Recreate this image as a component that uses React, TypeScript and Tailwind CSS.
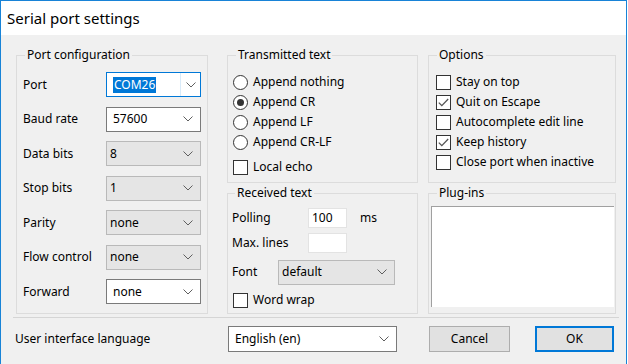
import React from 'react';

function Chevron({ color = '#5f5f5f' }: { color?: string }) {
  return (
    <svg width="10" height="6" viewBox="0 0 10 6" className="shrink-0">
      <path d="M0.5 0.5 L5 5 L9.5 0.5" fill="none" stroke={color} strokeWidth="1" />
    </svg>
  );
}

type ComboKind = 'focus' | 'white' | 'gray';

function Combo({ value, kind, width }: { value: string; kind: ComboKind; width: string }) {
  if (kind === 'focus') {
    return (
      <div className={`${width} h-[25px] flex items-center border border-[#0078d7] bg-white`}>
        <div className="flex-1 flex items-center pl-[6px]">
          <span className="bg-[#0078d7] text-white px-[1px] leading-[16px]">{value}</span>
        </div>
        <div className="h-full w-px bg-[#d9ebf9]" />
        <div className="w-[19px] flex justify-center">
          <Chevron />
        </div>
      </div>
    );
  }
  const styles =
    kind === 'white'
      ? 'border-[#7a7a7a] bg-white pl-[6px]'
      : 'border-[#b9b9b9] bg-[#e5e5e5] pl-[3px]';
  return (
    <div className={`${width} h-[25px] flex items-center justify-between border pr-[7px] ${styles}`}>
      <span className="leading-[16px]">{value}</span>
      <Chevron />
    </div>
  );
}

function Radio({ checked, label }: { checked?: boolean; label: string }) {
  return (
    <div className="flex items-center h-[20px] gap-[5px]">
      <div className="w-[15px] h-[15px] rounded-full border border-[#333333] bg-white flex items-center justify-center">
        {checked && <div className="w-[7px] h-[7px] rounded-full bg-[#333333]" />}
      </div>
      <span>{label}</span>
    </div>
  );
}

function Check({ checked, label }: { checked?: boolean; label: string }) {
  return (
    <div className="flex items-center h-[20px] gap-[5px]">
      <div className="w-[15px] h-[15px] border border-[#333333] bg-white flex items-center justify-center">
        {checked && (
          <svg width="11" height="9" viewBox="0 0 11 9">
            <path d="M0.8 4.6 L3.8 7.6 L10.2 1" fill="none" stroke="#555555" strokeWidth="1.3" />
          </svg>
        )}
      </div>
      <span>{label}</span>
    </div>
  );
}

function Group({
  title,
  className,
  legendClass,
  children,
}: {
  title: string;
  className: string;
  legendClass: string;
  children: React.ReactNode;
}) {
  return (
    <fieldset className={`border border-[#dcdcdc] ${className}`}>
      <legend className={`px-[2px] leading-[16px] ${legendClass}`}>{title}</legend>
      {children}
    </fieldset>
  );
}

const portRows: { label: string; value: string; kind: ComboKind }[] = [
  { label: 'Port', value: 'COM26', kind: 'focus' },
  { label: 'Baud rate', value: '57600', kind: 'white' },
  { label: 'Data bits', value: '8', kind: 'gray' },
  { label: 'Stop bits', value: '1', kind: 'gray' },
  { label: 'Parity', value: 'none', kind: 'gray' },
  { label: 'Flow control', value: 'none', kind: 'gray' },
  { label: 'Forward', value: 'none', kind: 'white' },
];

export default function App() {
  return (
    <div className="w-[628px] h-[364px] bg-white font-['Noto_Sans',sans-serif] text-[12px] text-black overflow-hidden">
      <div className="w-[627px] h-[364px] border-l border-t border-r border-[#1883d7] flex flex-col">
        {/* Title bar */}
        <div className="h-[34px] bg-white flex items-center pl-[6px] text-[15px]">Serial port settings</div>

        {/* Client area */}
        <div className="flex-1 bg-[#f0f0f0] flex flex-col">
          <div className="flex pl-[15px] pt-[12px]">
            {/* Port configuration */}
            <Group
              title="Port configuration"
              legendClass="ml-[2px]"
              className="w-[192px] h-[267px] pl-[6px] pr-[6px] pt-[9px]"
            >
              <div className="flex flex-col gap-[9.5px]">
                {portRows.map((r) => (
                  <div key={r.label} className="flex items-center justify-between h-[25px]">
                    <span>{r.label}</span>
                    <Combo value={r.value} kind={r.kind} width="w-[95px]" />
                  </div>
                ))}
              </div>
            </Group>

            {/* Middle column */}
            <div className="ml-[19px] flex flex-col gap-[2px]">
              <Group title="Transmitted text" legendClass="ml-[3px]" className="w-[191px] h-[136px] pl-[5px] pt-[9px]">
                <Radio label="Append nothing" />
                <Radio checked label="Append CR" />
                <Radio label="Append LF" />
                <Radio label="Append CR-LF" />
                <div className="mt-[5px]">
                  <Check label="Local echo" />
                </div>
              </Group>
              <Group title="Received text" legendClass="ml-[3px]" className="w-[191px] h-[129px] pl-[4px] pt-[7px]">
                <div className="flex items-center h-[20px]">
                  <span className="w-[76px]">Polling</span>
                  <div className="w-[39px] h-[20px] border border-[#e3e3e3] bg-white pl-[3px] leading-[18px]">100</div>
                  <span className="ml-[13px]">ms</span>
                </div>
                <div className="flex items-center h-[20px] mt-[5px]">
                  <span className="w-[76px]">Max. lines</span>
                  <div className="w-[39px] h-[20px] border border-[#e3e3e3] bg-white" />
                </div>
                <div className="flex items-center h-[26px] mt-[6px]">
                  <span className="w-[46px]">Font</span>
                  <Combo value="default" kind="gray" width="w-[117px]" />
                </div>
                <div className="mt-[5px] pl-[1px]">
                  <Check label="Word wrap" />
                </div>
              </Group>
            </div>

            {/* Right column */}
            <div className="ml-[10px] flex flex-col gap-[2px]">
              <Group title="Options" legendClass="ml-[1px]" className="w-[188px] h-[136px] pl-[7px] pt-[9px]">
                <Check label="Stay on top" />
                <Check checked label="Quit on Escape" />
                <Check label="Autocomplete edit line" />
                <Check checked label="Keep history" />
                <Check label="Close port when inactive" />
              </Group>
              <Group title="Plug-ins" legendClass="ml-[6px]" className="w-[188px] h-[129px] pl-[2px] pr-[1px] pt-[5px]">
                <div className="h-[101px] bg-white border-t border-l border-[#a0a0a0]" />
              </Group>
            </div>
          </div>

          <div className="ml-[12px] mr-[7px] mt-[3px] h-px bg-[#d5d5d5]" />

          {/* Bottom row */}
          <div className="flex items-center h-[26px] mt-[8px] pl-[14px]">
            <span className="w-[213px]">User interface language</span>
            <Combo value="English (en)" kind="white" width="w-[169px] h-[26px]" />
            <button className="ml-[32px] w-[81px] h-[26px] bg-[#e1e1e1] border border-[#adadad]">Cancel</button>
            <button className="ml-[25px] w-[79px] h-[26px] bg-[#e1e1e1] border-2 border-[#0078d7]">OK</button>
          </div>
        </div>
      </div>
    </div>
  );
}
